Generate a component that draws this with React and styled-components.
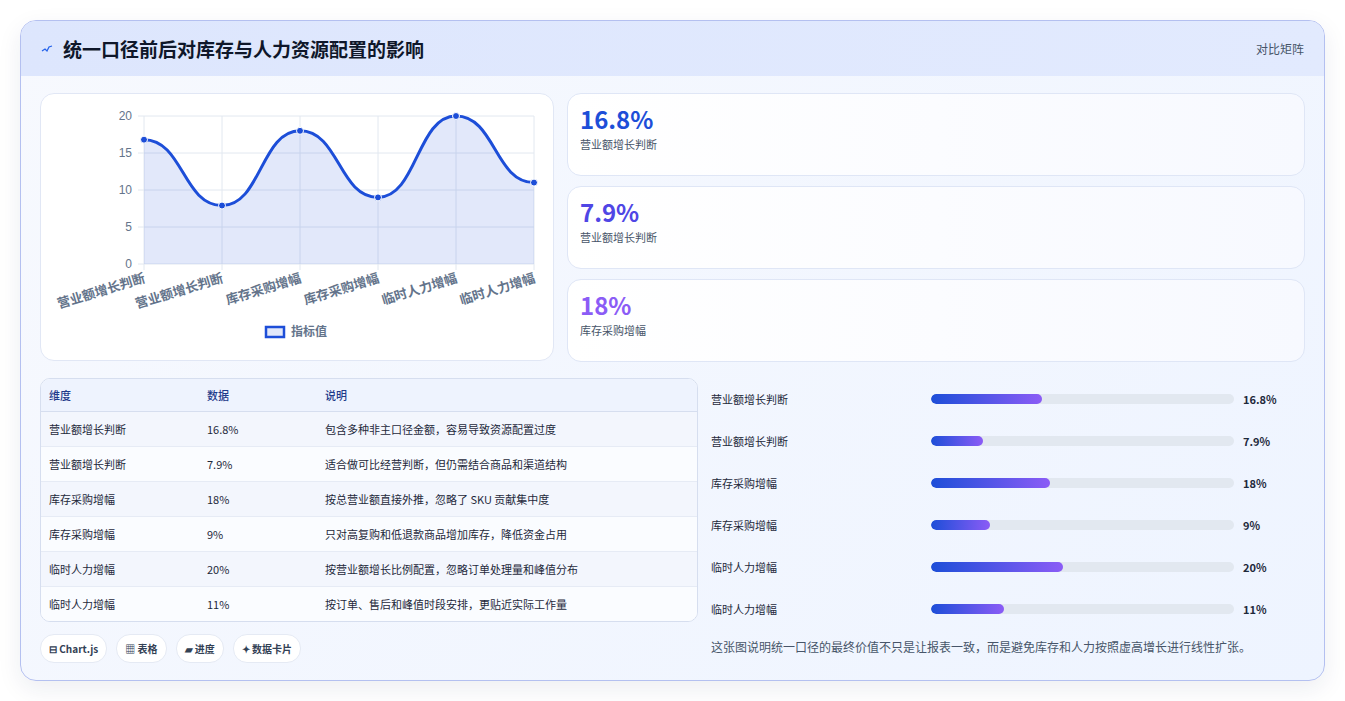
import styled, { createGlobalStyle } from 'styled-components';

const data = [
  { name: '营业额增长判断', value: 16.8, label: '16.8%', note: '包含多种非主口径金额，容易导致资源配置过度' },
  { name: '营业额增长判断', value: 7.9, label: '7.9%', note: '适合做可比经营判断，但仍需结合商品和渠道结构' },
  { name: '库存采购增幅', value: 18, label: '18%', note: '按总营业额直接外推，忽略了 SKU 贡献集中度' },
  { name: '库存采购增幅', value: 9, label: '9%', note: '只对高复购和低退款商品增加库存，降低资金占用' },
  { name: '临时人力增幅', value: 20, label: '20%', note: '按营业额增长比例配置，忽略订单处理量和峰值分布' },
  { name: '临时人力增幅', value: 11, label: '11%', note: '按订单、售后和峰值时段安排，更贴近实际工作量' },
];

const stats = [
  { value: '16.8%', label: '营业额增长判断', color: '#1d4ed8' },
  { value: '7.9%', label: '营业额增长判断', color: '#4f46e5' },
  { value: '18%', label: '库存采购增幅', color: '#8b5cf6' },
];

const GlobalStyle = createGlobalStyle`
  body {
    margin: 0;
    background: #fff;
    font-family: "Noto Sans CJK SC", "Noto Sans", sans-serif;
  }
`;

const Page = styled.div`
  padding: 20px;
`;

const Card = styled.div`
  border: 1px solid #b4c0f0;
  border-radius: 16px;
  overflow: hidden;
  background: linear-gradient(135deg, #f7f9fe, #eef4ff);
  box-shadow: 0 8px 24px rgba(30, 41, 90, 0.08);
  height: 661px;
  box-sizing: border-box;
`;

const Header = styled.div`
  height: 55px;
  background: linear-gradient(90deg, #dde6fd, #e2eafe);
  display: flex;
  align-items: center;
  justify-content: space-between;
  padding: 0 20px;
`;

const Title = styled.h1`
  margin: 0;
  font-size: 19px;
  font-weight: 700;
  color: #0f172a;
  display: flex;
  align-items: center;
  gap: 10px;
`;

const HeaderTag = styled.span`
  font-size: 12px;
  color: #475569;
`;

const Body = styled.div`
  padding: 17px 19px 0 19px;
  display: flex;
  flex-direction: column;
  gap: 16px;
`;

const Row = styled.div`
  display: grid;
  grid-template-columns: ${p => p.cols};
  column-gap: 13px;
`;

const Panel = styled.div`
  background: #fff;
  border: 1px solid #e1e7f5;
  border-radius: 14px;
  height: 268px;
  box-sizing: border-box;
`;

const StatList = styled.div`
  display: flex;
  flex-direction: column;
  gap: 10px;
`;

const Stat = styled.div`
  height: 83px;
  box-sizing: border-box;
  border: 1px solid #dfe6f6;
  border-radius: 14px;
  background: linear-gradient(90deg, #fff, #f7f9ff);
  padding: 10px 12px;
`;

const StatValue = styled.div`
  font-size: 24px;
  font-weight: 700;
  color: ${p => p.color};
  line-height: 30px;
`;

const StatLabel = styled.div`
  font-size: 11px;
  color: #475569;
  margin-top: 2px;
`;

const Left = styled.div`
  display: flex;
  flex-direction: column;
  gap: 12px;
`;

const Table = styled.table`
  width: 100%;
  border-collapse: separate;
  border-spacing: 0;
  border: 1px solid #d6deef;
  border-radius: 10px;
  overflow: hidden;
  font-size: 11px;
  color: #1e293b;
  background: #fff;
`;

const Th = styled.th`
  text-align: left;
  font-weight: 500;
  color: #1e3a8a;
  background: #eef3fe;
  height: 32px;
  padding: 0 8px;
  border-bottom: 1px solid #d6deef;
  width: ${p => p.w || 'auto'};
`;

const Td = styled.td`
  height: 34px;
  padding: 0 8px;
  white-space: nowrap;
  border-top: ${p => (p.first ? 'none' : '1px solid #e6ebf5')};
  background: ${p => (p.odd ? '#f3f6fd' : '#fafcff')};
`;

const Tags = styled.div`
  display: flex;
  gap: 9px;
`;

const Tag = styled.span`
  font-size: 10px;
  font-weight: 600;
  color: #334155;
  background: #fff;
  border: 1px solid #e5eaf4;
  border-radius: 14px;
  padding: 0 8px;
  height: 27px;
  display: flex;
  align-items: center;
`;

const Bars = styled.div`
  display: flex;
  flex-direction: column;
`;

const BarRow = styled.div`
  display: grid;
  grid-template-columns: 211px 303px 1fr;
  align-items: center;
  column-gap: 9px;
  height: 42px;
  font-size: 11px;
  color: #1e293b;
`;

const Track = styled.div`
  height: 10px;
  border-radius: 5px;
  background: #e2e8f0;
  overflow: hidden;
`;

const Fill = styled.div`
  height: 100%;
  border-radius: 5px;
  background: linear-gradient(90deg, #1d4ed8, #8b5cf6);
`;

const BarValue = styled.span`
  font-weight: 700;
`;

const Caption = styled.p`
  margin: 8px 0 0 0;
  font-size: 12px;
  color: #475569;
`;

function Chart() {
  const x0 = 103, w = 390, y0 = 170, h = 148;
  const pts = data.map((d, i) => [x0 + (i * w) / 5, y0 - (d.value / 20) * h]);
  let path = `M${pts[0][0]},${pts[0][1]}`;
  for (let i = 1; i < pts.length; i++) {
    const [px, py] = pts[i - 1];
    const [cx, cy] = pts[i];
    const dx = (cx - px) / 2;
    path += ` C${px + dx},${py} ${cx - dx},${cy} ${cx},${cy}`;
  }
  const area = `${path} L${x0 + w},${y0} L${x0},${y0} Z`;
  return (
    <svg width="512" height="266" viewBox="0 0 512 266">
      {[0, 5, 10, 15, 20].map(v => {
        const y = y0 - (v / 20) * h;
        return (
          <g key={v}>
            <line x1={x0 - 6} x2={x0 + w} y1={y} y2={y} stroke="#e2e8f0" />
            <text x={x0 - 12} y={y + 4} fontSize="12" fill="#64748b" textAnchor="end" fontFamily="Liberation Sans, sans-serif">{v}</text>
          </g>
        );
      })}
      {pts.map(([x], i) => (
        <line key={i} x1={x} x2={x} y1={y0 - h} y2={y0 + 6} stroke="#e2e8f0" />
      ))}
      <path d={area} fill="rgba(29,78,216,0.13)" />
      <path d={path} fill="none" stroke="#1d4ed8" strokeWidth="3" />
      {pts.map(([x, y], i) => (
        <circle key={i} cx={x} cy={y} r="3.5" fill="#1d4ed8" stroke="#fff" strokeWidth="1" />
      ))}
      {data.map((d, i) => (
        <text key={i} x={pts[i][0] + 2} y={y0 + 18} fontSize="13" fontWeight="600" fill="#64748b" textAnchor="end" transform={`rotate(-17 ${pts[i][0] + 2} ${y0 + 18})`}>{d.name}</text>
      ))}
      <rect x="225" y="233" width="18" height="10" fill="rgba(29,78,216,0.13)" stroke="#1d4ed8" strokeWidth="2.5" />
      <text x="250" y="242" fontSize="12" fontWeight="600" fill="#64748b">指标值</text>
    </svg>
  );
}

export default function App() {
  return (
    <Page>
      <GlobalStyle />
      <Card>
        <Header>
          <Title>
            <svg width="12" height="12" viewBox="0 0 12 12"><path d="M1 8 L4 6 L6 8 L8 4 L11 3" fill="none" stroke="#2563eb" strokeWidth="1.3" /></svg>
            统一口径前后对库存与人力资源配置的影响
          </Title>
          <HeaderTag>对比矩阵</HeaderTag>
        </Header>
        <Body>
          <Row cols="514px 1fr">
            <Panel><Chart /></Panel>
            <StatList>
              {stats.map((s, i) => (
                <Stat key={i}>
                  <StatValue color={s.color}>{s.value}</StatValue>
                  <StatLabel>{s.label}</StatLabel>
                </Stat>
              ))}
            </StatList>
          </Row>
          <Row cols="658px 1fr">
            <Left>
              <Table>
                <thead>
                  <tr><Th w="142px">维度</Th><Th w="102px">数据</Th><Th>说明</Th></tr>
                </thead>
                <tbody>
                  {data.map((d, i) => (
                    <tr key={i}>
                      <Td first={i === 0} odd={i % 2 === 0}>{d.name}</Td>
                      <Td first={i === 0} odd={i % 2 === 0}>{d.label}</Td>
                      <Td first={i === 0} odd={i % 2 === 0}>{d.note}</Td>
                    </tr>
                  ))}
                </tbody>
              </Table>
              <Tags>
                <Tag>⊟ Chart.js</Tag>
                <Tag>▦ 表格</Tag>
                <Tag>▰ 进度</Tag>
                <Tag>✦ 数据卡片</Tag>
              </Tags>
            </Left>
            <Bars>
              {data.map((d, i) => (
                <BarRow key={i}>
                  <span>{d.name}</span>
                  <Track><Fill style={{ width: `${d.value * 2.18}%` }} /></Track>
                  <BarValue>{d.label}</BarValue>
                </BarRow>
              ))}
              <Caption>这张图说明统一口径的最终价值不只是让报表一致，而是避免库存和人力按照虚高增长进行线性扩张。</Caption>
            </Bars>
          </Row>
        </Body>
      </Card>
    </Page>
  );
}
